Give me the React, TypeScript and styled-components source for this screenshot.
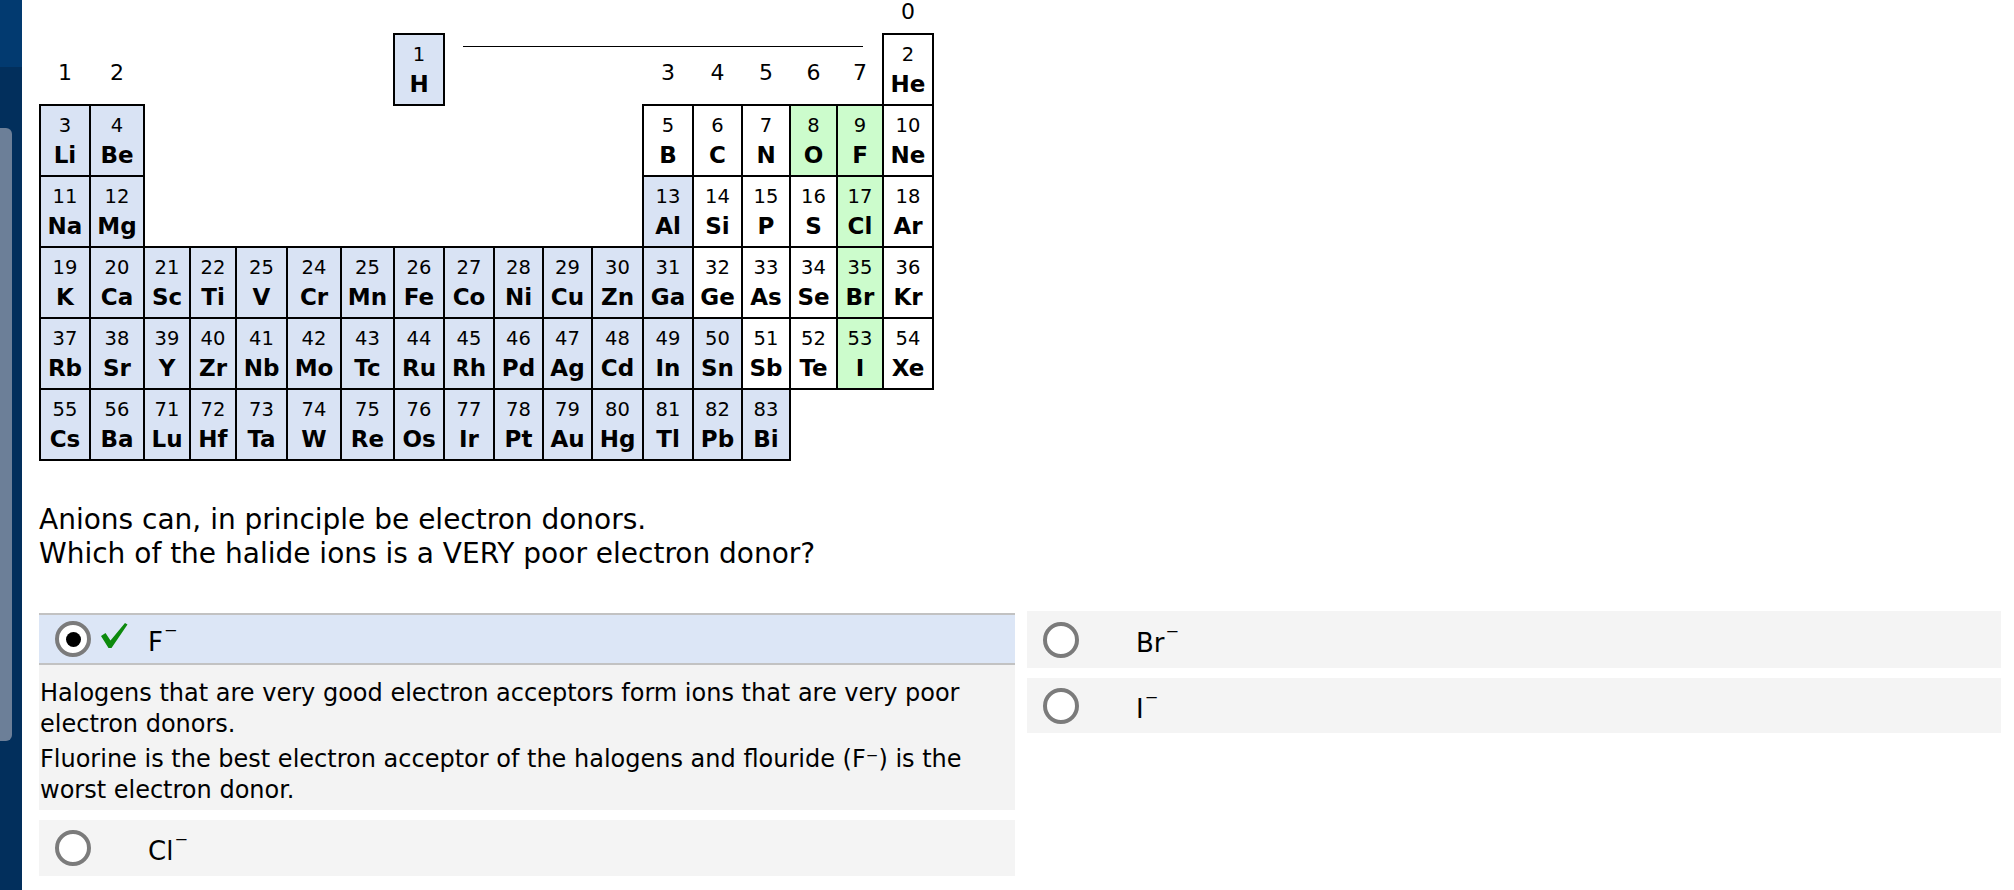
import styled, { createGlobalStyle } from "styled-components";

const GlobalStyle = createGlobalStyle`
  html, body {
    margin: 0;
    padding: 0;
    background: #ffffff;
  }
  body {
    font-family: "DejaVu Sans", Verdana, sans-serif;
    color: #000000;
    overflow: hidden;
  }
`;

type Tone = "metal" | "halogen" | "plain";

interface Element {
  n: number;
  s: string;
  col: number;
  row: number;
  tone: Tone;
}

// column widths taken from the auto-sized table in the original
const COLS = [50, 54, 46, 46, 51, 54, 53, 50, 50, 49, 49, 51, 50, 49, 48, 47, 46, 50];

const Page = styled.div`
  display: flex;
  width: 2014px;
  height: 890px;
`;

const Sidebar = styled.div`
  display: flex;
  flex-direction: column;
  width: 22px;
  flex-shrink: 0;
  background: #022f5c;
`;

const SidebarBand = styled.div`
  height: 67px;
  background: #023a70;
`;

const ScrollThumb = styled.div`
  width: 12px;
  height: 613px;
  margin-top: 61px;
  border-radius: 0 6px 6px 0;
  background: #6c7f98;
`;

const Main = styled.main`
  flex: 1;
  padding-left: 17px;
`;

const PeriodicGrid = styled.div`
  display: grid;
  grid-template-columns: ${COLS.map((w) => `${w}px`).join(" ")};
  grid-template-rows: 34px repeat(6, 71px);
  margin-left: 1px;
  width: max-content;
`;

const GroupLabel = styled.div<{ $col: number; $row: number; $top: number }>`
  grid-column: ${(p) => p.$col};
  grid-row: ${(p) => p.$row};
  align-self: start;
  padding-top: ${(p) => p.$top}px;
  text-align: center;
  font-size: 22px;
  line-height: 24px;
`;

const Rule = styled.div`
  grid-column: 9 / 18;
  grid-row: 2;
  align-self: start;
  margin: 12px 20px 0 19px;
  border-top: 1px solid #000000;
`;

const toneColor: Record<Tone, string> = {
  metal: "#d9e3f4",
  halogen: "#ccfccc",
  plain: "#ffffff",
};

const Cell = styled.div<{ $col: number; $row: number; $tone: Tone }>`
  grid-column: ${(p) => p.$col};
  grid-row: ${(p) => p.$row};
  margin: -1px;
  border: 2px solid #000000;
  background: ${(p) => toneColor[p.$tone]};
  display: flex;
  flex-direction: column;
  align-items: center;
  justify-content: center;
`;

const ElementNumber = styled.span`
  font-size: 19.5px;
  line-height: 28px;
`;

const ElementSymbol = styled.span`
  font-size: 23px;
  font-weight: bold;
  line-height: 30px;
`;

const Question = styled.div`
  margin-top: 43px;
  font-size: 28px;
  line-height: 34px;
`;

const Answers = styled.div`
  display: grid;
  grid-template-columns: 976px 974px;
  column-gap: 12px;
  margin-top: 40px;
  align-items: start;
`;

const AnswerColumn = styled.div<{ $offset: number }>`
  display: flex;
  flex-direction: column;
  gap: 10px;
  padding-top: ${(p) => p.$offset}px;
`;

const AnswerBlock = styled.div`
  display: flex;
  flex-direction: column;
`;

const Option = styled.div<{ $selected?: boolean; $height: number }>`
  display: flex;
  align-items: center;
  box-sizing: border-box;
  height: ${(p) => p.$height}px;
  padding-left: 16px;
  background: ${(p) => (p.$selected ? "#dce6f6" : "#f4f4f4")};
  border-top: ${(p) => (p.$selected ? "2px solid #c2c2c2" : "none")};
  border-bottom: ${(p) => (p.$selected ? "2px solid #c2c2c2" : "none")};
`;

const Radio = styled.span<{ $checked?: boolean }>`
  display: flex;
  align-items: center;
  justify-content: center;
  box-sizing: border-box;
  width: 36px;
  height: 36px;
  flex-shrink: 0;
  border: 4px solid #7b7b7b;
  border-radius: 50%;
  background: #ffffff;

  &::after {
    content: "";
    display: ${(p) => (p.$checked ? "block" : "none")};
    width: 15px;
    height: 15px;
    border-radius: 50%;
    background: #000000;
  }
`;

const CheckSlot = styled.span`
  display: flex;
  width: 28px;
  height: 26px;
  margin: 0 20px 8px 9px;
`;

const OptionLabel = styled.span`
  font-size: 26px;
  line-height: 30px;
`;

// raised minus so it sits at cap height like the original superscript
const Charge = styled.span`
  display: inline-block;
  vertical-align: 0.28em;
  margin-left: 1px;
`;

const Feedback = styled.div`
  box-sizing: border-box;
  height: 145px;
  padding: 13px 4px 0 1px;
  background: #f3f3f3;
  font-size: 24px;
  line-height: 31px;
`;

const FeedbackPara = styled.p`
  margin: 0 0 4px;
`;

function CheckMark() {
  return (
    <svg width="28" height="26" viewBox="0 0 28 26">
      <path d="M1 14 L5.5 11 L10.5 18.5 L25 1 L27.5 2.5 L11.5 26 L8.5 26 Z" fill="#0d8a0d" />
    </svg>
  );
}

function Ion({ symbol }: { symbol: string }) {
  return (
    <OptionLabel>
      {symbol}
      <Charge>⁻</Charge>
    </OptionLabel>
  );
}

const metalExtras = ["Al", "Ga", "In", "Sn", "Tl", "Pb", "Bi", "H"];
const halogens = ["O", "F", "Cl", "Br", "I"];

const rows: { row: number; start: number; items: [number, string][] }[] = [
  { row: 2, start: 8, items: [[1, "H"]] },
  { row: 2, start: 18, items: [[2, "He"]] },
  { row: 3, start: 1, items: [[3, "Li"], [4, "Be"]] },
  { row: 3, start: 13, items: [[5, "B"], [6, "C"], [7, "N"], [8, "O"], [9, "F"], [10, "Ne"]] },
  { row: 4, start: 1, items: [[11, "Na"], [12, "Mg"]] },
  { row: 4, start: 13, items: [[13, "Al"], [14, "Si"], [15, "P"], [16, "S"], [17, "Cl"], [18, "Ar"]] },
  {
    row: 5,
    start: 1,
    items: [
      [19, "K"], [20, "Ca"], [21, "Sc"], [22, "Ti"], [25, "V"], [24, "Cr"], [25, "Mn"], [26, "Fe"], [27, "Co"],
      [28, "Ni"], [29, "Cu"], [30, "Zn"], [31, "Ga"], [32, "Ge"], [33, "As"], [34, "Se"], [35, "Br"], [36, "Kr"],
    ],
  },
  {
    row: 6,
    start: 1,
    items: [
      [37, "Rb"], [38, "Sr"], [39, "Y"], [40, "Zr"], [41, "Nb"], [42, "Mo"], [43, "Tc"], [44, "Ru"], [45, "Rh"],
      [46, "Pd"], [47, "Ag"], [48, "Cd"], [49, "In"], [50, "Sn"], [51, "Sb"], [52, "Te"], [53, "I"], [54, "Xe"],
    ],
  },
  {
    row: 7,
    start: 1,
    items: [
      [55, "Cs"], [56, "Ba"], [71, "Lu"], [72, "Hf"], [73, "Ta"], [74, "W"], [75, "Re"], [76, "Os"], [77, "Ir"],
      [78, "Pt"], [79, "Au"], [80, "Hg"], [81, "Tl"], [82, "Pb"], [83, "Bi"],
    ],
  },
];

const elements: Element[] = rows.flatMap(({ row, start, items }) =>
  items.map(([n, s], i) => {
    const col = start + i;
    let tone: Tone = "plain";
    if (halogens.includes(s)) tone = "halogen";
    else if (col <= 12 || metalExtras.includes(s)) tone = "metal";
    return { n, s, col, row, tone };
  })
);

const groupLabels = [
  { text: "0", col: 18, row: 1, top: 0 },
  { text: "1", col: 1, row: 2, top: 27 },
  { text: "2", col: 2, row: 2, top: 27 },
  { text: "3", col: 13, row: 2, top: 27 },
  { text: "4", col: 14, row: 2, top: 27 },
  { text: "5", col: 15, row: 2, top: 27 },
  { text: "6", col: 16, row: 2, top: 27 },
  { text: "7", col: 17, row: 2, top: 27 },
];

export default function App() {
  return (
    <>
      <GlobalStyle />
      <Page>
        <Sidebar>
          <SidebarBand />
          <ScrollThumb />
        </Sidebar>
        <Main>
          <PeriodicGrid>
            {groupLabels.map((g) => (
              <GroupLabel key={g.text} $col={g.col} $row={g.row} $top={g.top}>
                {g.text}
              </GroupLabel>
            ))}
            <Rule />
            {elements.map((el) => (
              <Cell key={el.s} $col={el.col} $row={el.row} $tone={el.tone}>
                <ElementNumber>{el.n}</ElementNumber>
                <ElementSymbol>{el.s}</ElementSymbol>
              </Cell>
            ))}
          </PeriodicGrid>

          <Question>
            Anions can, in principle be electron donors.
            <br />
            Which of the halide ions is a VERY poor electron donor?
          </Question>

          <Answers>
            <AnswerColumn $offset={2}>
              <AnswerBlock>
                <Option $selected $height={52}>
                  <Radio $checked />
                  <CheckSlot>
                    <CheckMark />
                  </CheckSlot>
                  <Ion symbol="F" />
                </Option>
                <Feedback>
                  <FeedbackPara>
                    Halogens that are very good electron acceptors form ions that are very poor electron donors.
                  </FeedbackPara>
                  <FeedbackPara>
                    Fluorine is the best electron acceptor of the halogens and flouride (F⁻) is the worst electron
                    donor.
                  </FeedbackPara>
                </Feedback>
              </AnswerBlock>
              <Option $height={56}>
                <Radio />
                <CheckSlot />
                <Ion symbol="Cl" />
              </Option>
            </AnswerColumn>
            <AnswerColumn $offset={0}>
              <Option $height={57}>
                <Radio />
                <CheckSlot />
                <Ion symbol="Br" />
              </Option>
              <Option $height={55}>
                <Radio />
                <CheckSlot />
                <Ion symbol="I" />
              </Option>
            </AnswerColumn>
          </Answers>
        </Main>
      </Page>
    </>
  );
}
